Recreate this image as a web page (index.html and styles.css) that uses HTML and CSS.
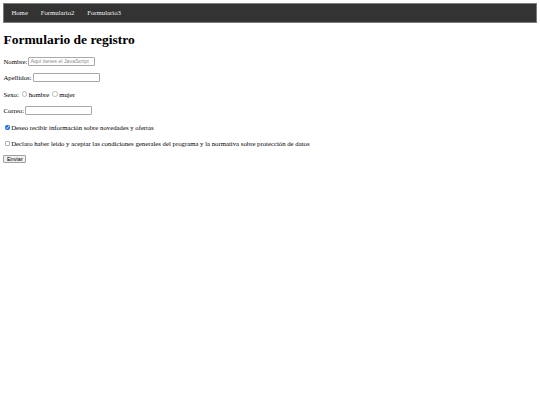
FILE: index.html
```html
<!DOCTYPE html>
<html lang="es">
<head>
<meta charset="utf-8">
<title>Formulario de registro</title>
<link rel="stylesheet" href="styles.css">
</head>
<body>
<nav class="topnav">
  <a href="#" class="navlink">Home</a>
  <a href="#" class="navlink">Formulario2</a>
  <a href="#" class="navlink">Formulario3</a>
</nav>
<h1 class="title">Formulario de registro</h1>
<form class="form">
  <p class="row"><label class="lbl">Nombre: <input type="text" class="field" placeholder="Aquí tienes el JavaScript"></label></p>
  <p class="row"><label class="lbl">Apellidos: <input type="text" class="field"></label></p>
  <p class="row">Sexo:&nbsp;<input type="radio" name="sexo" class="radio">hombre&nbsp;<input type="radio" name="sexo" class="radio">mujer</p>
  <p class="row"><label class="lbl">Correo: <input type="email" class="field"></label></p>
  <p class="row"><label class="lbl"><input type="checkbox" class="check" checked>Deseo recibir información sobre novedades y ofertas</label></p>
  <p class="row"><label class="lbl"><input type="checkbox" class="check">Declaro haber leido y aceptar las condiciones generales del programa y la normativa sobre protección de datos</label></p>
  <button type="button" class="btn">Enviar</button>
</form>
</body>
</html>
```
FILE: styles.css
```css
html, body {
  background: #fff;
}
body {
  margin: 3px 3.4px;
  font-family: "Liberation Serif", "Times New Roman", serif;
  font-size: 6.75px;
  color: #000;
}
.topnav {
  display: flex;
  align-items: center;
  height: 17.5px;
  background: #333;
  border: 1px solid #7c7c7c;
  padding: 0 0 0 0.6px;
}
.navlink {
  color: #f2f2f2;
  text-decoration: none;
  font-size: 6.75px;
  padding: 0 6.4px;
}
.title {
  font-size: 13.5px;
  font-weight: bold;
  margin: 9px 0 9px;
  line-height: 16px;
}
.row {
  margin: 0 0 6.75px;
  height: 9.7px;
  display: flex;
  align-items: center;
}
.lbl {
  display: flex;
  align-items: center;
}
.field {
  box-sizing: border-box;
  width: 67px;
  height: 9px;
  font-size: 5.3px;
  font-family: "Liberation Sans", Arial, sans-serif;
  border: 1px solid #a8a8a8;
  border-radius: 1px;
  padding: 0 1px;
  margin: 0 0 0 1px;
  background: #fff;
}
.field::placeholder {
  color: #8a8a8a;
}
.radio {
  appearance: none;
  -webkit-appearance: none;
  box-sizing: border-box;
  width: 5.5px;
  height: 5.5px;
  border: 1px solid #b8b8b8;
  border-radius: 50%;
  background: #fff;
  margin: 0 1.3px 0 1.4px;
}
.check {
  width: 5.2px;
  height: 5.2px;
  margin: 0 1.3px 0 1.3px;
  accent-color: #1a73e8;
}
.check:not(:checked) {
  appearance: none;
  -webkit-appearance: none;
  box-sizing: border-box;
  border: 1px solid #b0b0b0;
  border-radius: 1px;
  background: #fff;
}
.btn {
  box-sizing: border-box;
  font-family: "Liberation Sans", Arial, sans-serif;
  font-size: 5.6px;
  padding: 0 2.5px;
  height: 8px;
  line-height: 6px;
  border: 1px solid #a0a0a0;
  border-radius: 1px;
  background: #efefef;
  color: #000;
  margin: 0;
}
```
